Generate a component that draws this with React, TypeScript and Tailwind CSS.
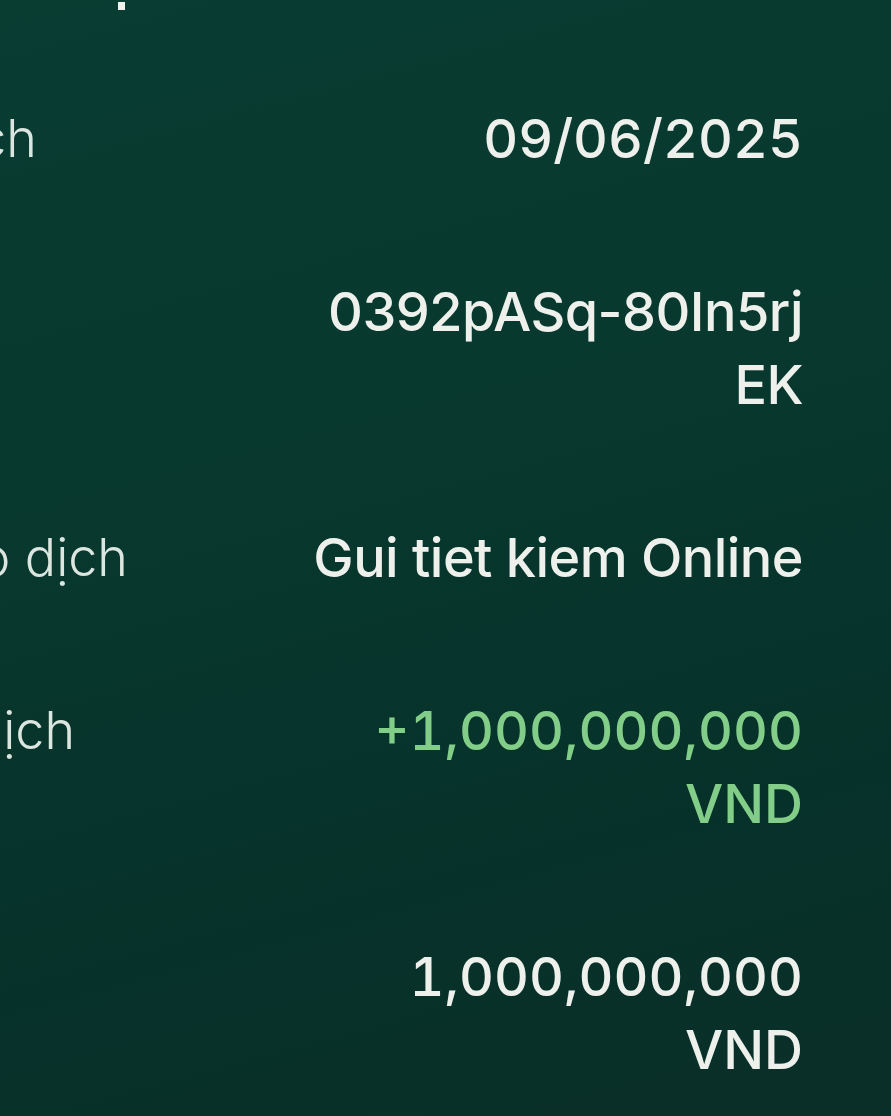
export default function App() {
  const rows = [
    { label: "Ngày giao dịch", end: "w-[37px]", lines: ["09/06/2025"], green: false, nums: true },
    { label: "Mã giao dịch", end: "w-0 -ml-[40px]", lines: ["0392pASq-80In5rj", "EK"], green: false, nums: false },
    { label: "Loại giao dịch", end: "w-[128px]", lines: ["Gui tiet kiem Online"], green: false, nums: false },
    { label: "Số tiền giao dịch", end: "w-[75px]", lines: ["+1,000,000,000", "VND"], green: true, nums: true },
    { label: "Số dư", end: "w-0 -ml-[40px]", lines: ["1,000,000,000", "VND"], green: false, nums: true },
  ];

  return (
    <div className="min-h-screen w-full overflow-hidden bg-[linear-gradient(165deg,#093d32_0%,#08382e_40%,#06322a_70%,#0a2f28_100%)] font-['Inter','Noto_Sans',sans-serif]">
      <div className="ml-[118px] mt-[2px] h-[8px] w-[7px] bg-[#eef1ec]" />

      <div className="mt-[92px] flex flex-col gap-[100px] pr-[88px]">
        {rows.map((row, idx) => (
          <div key={idx} className="flex items-start justify-between">
            <div className={`${row.end} flex shrink-0 justify-end`}>
              <span className="whitespace-nowrap text-[52px] leading-[73px] font-light text-[#dce6e0]">
                {row.label}
              </span>
            </div>
            <div
              className={`text-right text-[54px] leading-[73px] font-medium ${row.nums ? "tabular-nums" : "tracking-[-0.01em]"} ${
                row.green ? "text-[#82cd88]" : "text-[#eef0ec]"
              }`}
            >
              {row.lines.map((line, i) => (
                <div key={i} className="whitespace-nowrap">{line}</div>
              ))}
            </div>
          </div>
        ))}
      </div>
    </div>
  );
}
